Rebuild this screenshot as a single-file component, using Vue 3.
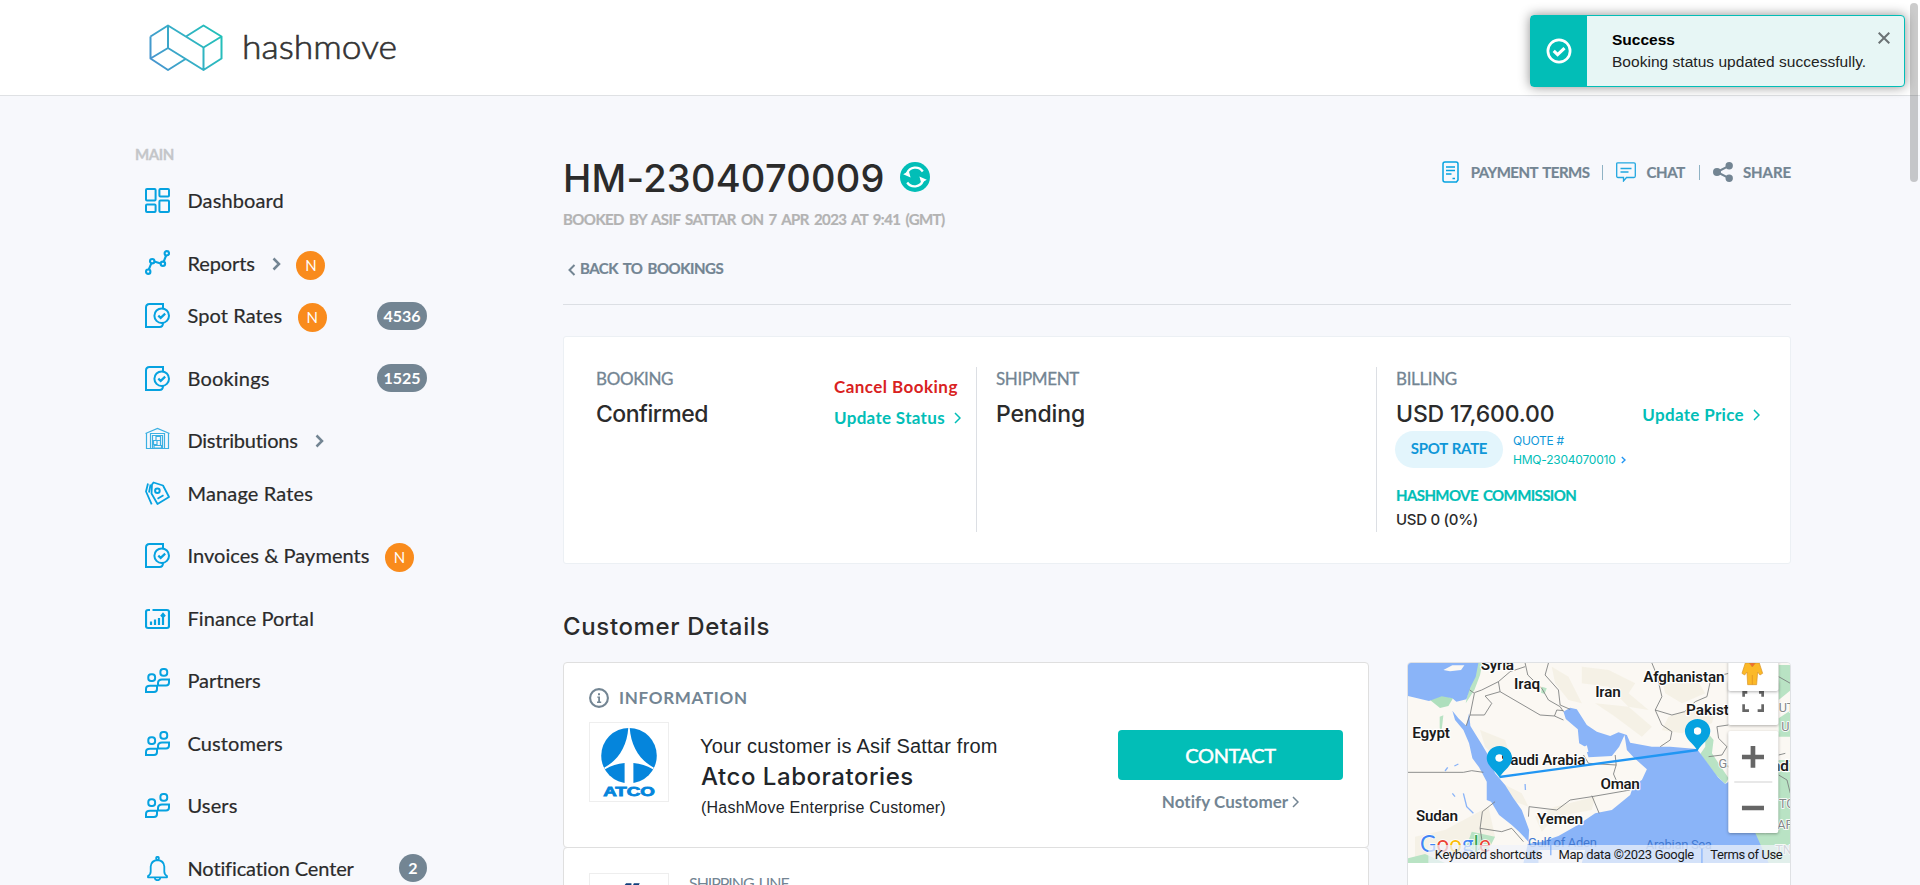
<script setup>
const menu = [
  { label: 'Dashboard', icon: 'grid', ls: 0.12 },
  { label: 'Reports', icon: 'graph', sub: true, isNew: true, ls: -0.1 },
  { label: 'Spot Rates', icon: 'booking', isNew: true, count: '4536', ls: 0.09 },
  { label: 'Bookings', icon: 'booking', count: '1525', ls: 0.18 },
  { label: 'Distributions', icon: 'warehouse', sub: true, ls: -0.24 },
  { label: 'Manage Rates', icon: 'tag', ls: 0.15 },
  { label: 'Invoices & Payments', icon: 'booking', isNew: true, ls: 0.04 },
  { label: 'Finance Portal', icon: 'finance', ls: 0.08 },
  { label: 'Partners', icon: 'people', ls: -0.08 },
  { label: 'Customers', icon: 'people', ls: 0.1 },
  { label: 'Users', icon: 'people', ls: 0.13 },
  { label: 'Notification Center', icon: 'bell', count: '2', ls: -0.12 }
]
</script>

<template>
  <div class="page">
    <header class="topbar">
      <svg class="brand" width="260" height="60" viewBox="0 0 260 60">
        <defs>
          <linearGradient id="brandGrad" gradientUnits="userSpaceOnUse" x1="0" y1="50" x2="74" y2="8">
            <stop offset="0" stop-color="#4a90d0" />
            <stop offset="0.5" stop-color="#35afc6" />
            <stop offset="1" stop-color="#1fc3b6" />
          </linearGradient>
        </defs>
        <g fill="none" stroke="url(#brandGrad)" stroke-width="2" stroke-linejoin="round">
          <path d="M1.5 17.5 19 6.500 54.500 28.500V51L19 29V6.500M1.500 17.500V39.500L19 29M1.500 39.500 19 51 36.500 40M37 17.500 54.500 6.500 72.500 17.500 54.500 28.500M72.500 17.500V39.500L54.500 51" />
        </g>
        <text x="93" y="39.500" textLength="155" lengthAdjust="spacingAndGlyphs">hashmove</text>
      </svg>
    </header>

    <div class="body">
      <aside class="sidebar">
        <div class="section">MAIN</div>
        <nav>
          <div v-for="m in menu" :key="m.label" class="item" :class="{ tight: m.sub }">
            <svg class="icon" :class="m.icon" width="25" height="25" viewBox="0 0 25 25">
              <g v-if="m.icon === 'grid'" fill="none" stroke="#06a2e0" stroke-width="2">
                <rect x="1" y="1" width="9.600" height="11.600" rx="1" />
                <rect x="14.400" y="1" width="9.600" height="7.600" rx="1" />
                <rect x="1" y="16.400" width="9.600" height="7.600" rx="1" />
                <rect x="14.400" y="12.400" width="9.600" height="11.600" rx="1" />
              </g>
              <g v-else-if="m.icon === 'graph'" fill="none" stroke="#06a2e0" stroke-width="2.100">
                <path d="M3.800 19.500 6.300 13.300M9.300 11.600 15.700 13.400M18.700 11.700 21.100 5.500" />
                <circle cx="3.200" cy="21.700" r="2.200" /><circle cx="7.200" cy="11.200" r="2.200" />
                <circle cx="17.900" cy="13.800" r="2.200" /><circle cx="21.800" cy="3.300" r="2.200" />
              </g>
              <g v-else-if="m.icon === 'booking'" fill="none" stroke="#06a2e0" stroke-width="2">
                <path d="M18 5.500V1H4.500Q1 1 1 4.500V24H14.500Q18 24 18 20" />
                <circle cx="16.700" cy="12.700" r="7.300" />
                <path d="M13.300 12.600 15.700 14.900 20.200 10.600" stroke-width="2.200" />
              </g>
              <g v-else-if="m.icon === 'warehouse'" fill="none" stroke="#3cb0e2" stroke-width="1.200">
                <path d="M.5 6.500 12.500 1.500 24.500 6.500M1.500 6V21.500H23.500V6M5.500 21V6.500H19.500V21M7.500 21V8.500H17.500V21" />
                <path d="M11 9.500H15.500V13.500H11ZM8.500 13.500H12V17.500H8.500ZM9 18.500H16.500V21H9ZM12 13.500H15.500V18" />
              </g>
              <g v-else-if="m.icon === 'tag'" fill="none" stroke="#06a2e0" stroke-width="1.800" stroke-linejoin="round">
                <path d="M8.500 1.500 18 4.500 24 16 12.500 23 6.500 12.500 7 3.500Z" />
                <circle cx="12.400" cy="9.800" r="2.300" stroke-width="2" />
                <path d="M12.500 17.700 18.500 14.200M3 2.500 1 10.500 6.700 23.300M5.600 3.500 4 11.500" />
              </g>
              <g v-else-if="m.icon === 'finance'" fill="none" stroke="#06a2e0" stroke-width="2.200">
                <path d="M5 4H3Q1 4 1 6V20Q1 22 3 22H22Q24 22 24 20V6Q24 4 22 4H7.500" />
                <path d="M6 19V15.500M10 19V13.500M14 19V12M18 19V9M16 10.500 18 8 20 10.500" />
              </g>
              <g v-else-if="m.icon === 'people'" fill="none" stroke="#06a2e0" stroke-width="2">
                <rect x="3.300" y="6.300" width="6.800" height="6.700" rx="2.800" />
                <rect x="15.400" y="1" width="6.800" height="6.700" rx="2.800" />
                <path d="M5 17.800H12V21Q12 24 9 24H1V21Q1 17.800 5 17.800ZM17 11.500H24V14.500Q24 17.500 21 17.500H13V15Q13 11.500 17 11.500Z" />
              </g>
              <g v-else fill="none" stroke="#06a2e0" stroke-width="1.800" stroke-linejoin="round">
                <path d="M3 21.300H22V20Q19.300 18.500 19.300 15.500V10.500Q18.700 4.500 12.500 4 6.300 4.500 5.700 10.500V15.500Q5.700 18.500 3 20Z" />
                <circle cx="12.500" cy="2.200" r="1.400" /><path d="M9.800 22Q10 24.200 12.500 24.200T15.200 22" />
              </g>
            </svg>
            <span class="label" :style="{ letterSpacing: m.ls + 'px' }">{{ m.label }}</span>
            <svg v-if="m.sub" class="chev" width="9" height="14" viewBox="0 0 9 14"><path d="M1.500 1.500 7 7 1.500 12.500" fill="none" stroke="#738593" stroke-width="2.500" /></svg>
            <span v-if="m.isNew" class="new">N</span>
            <span v-if="m.count" class="count">{{ m.count }}</span>
          </div>
        </nav>
      </aside>

      <main class="content">
        <section class="head">
          <div>
            <h1>HM-2304070009
              <svg width="30" height="30" viewBox="0 0 30 30">
                <circle cx="15" cy="15" r="15" fill="#02beb7" />
                <g fill="none" stroke="#fff" stroke-width="2.300"><path d="M7 11.500A9 9 0 0 1 22.800 9.500M23 18.500A9 9 0 0 1 7.200 20.500" /></g>
                <path d="M3.200 12.200 8.800 9 10.600 15.500ZM26.800 17.800 21.200 21 19.400 14.500Z" fill="#fff" />
              </svg>
            </h1>
            <p class="booked">BOOKED BY ASIF SATTAR ON 7 APR 2023 AT 9:41 (GMT)</p>
            <a class="back">
              <svg width="8" height="12" viewBox="0 0 8 12"><path d="M6.500 1 1.500 6 6.500 11" fill="none" stroke="#738593" stroke-width="2" /></svg>BACK TO BOOKINGS
            </a>
          </div>
          <div class="tools">
            <svg width="17" height="22" viewBox="0 0 17 22" fill="none" stroke="#06a2e0" stroke-width="1.500">
              <path d="M3 1H14Q16 1 16 3V19L14.500 21H3Q1 21 1 19V3Q1 1 3 1ZM4 6H13M4 9.500H13M4 13H9.500M10.500 17.500H13" />
            </svg>
            <span class="t1">PAYMENT TERMS</span><i class="bar"></i>
            <svg width="20" height="20" viewBox="0 0 20 20" fill="none" stroke="#22a7e0" stroke-width="1.300">
              <path d="M2 .8H18Q19.300 .8 19.300 2V14Q19.300 15.500 18 15.500H10.500L7.500 19V15.500H2Q.7 15.500 .7 14V2Q.7 .8 2 .8ZM4.500 6.500H15.500M4.500 10H12.500" />
            </svg>
            <span class="t2">CHAT</span><i class="bar"></i>
            <svg width="20" height="20" viewBox="0 0 20 20" fill="#738593" stroke="#738593" stroke-width="2">
              <path d="M4 10 16 3.800M4 10 16 16.200" /><circle cx="4" cy="10" r="3" /><circle cx="16.200" cy="3.800" r="2.700" /><circle cx="16.200" cy="16.200" r="2.700" />
            </svg>
            <span class="t3">SHARE</span>
          </div>
        </section>

        <section class="status">
          <div class="col">
            <div><h4>BOOKING</h4><h3>Confirmed</h3></div>
            <div class="actions">
              <a class="red">Cancel Booking</a>
              <a>Update Status<svg width="7" height="12" viewBox="0 0 7 12"><path d="M1 1 6 6 1 11" fill="none" stroke="#02beb7" stroke-width="1.500" /></svg></a>
            </div>
          </div>
          <div class="col mid"><div><h4>SHIPMENT</h4><h3>Pending</h3></div></div>
          <div class="col last">
            <div>
              <h4>BILLING</h4><h3>USD 17,600.00</h3>
              <div class="quote">
                <span class="pill">SPOT RATE</span>
                <div class="qtext"><div>QUOTE #</div><div class="qno">HMQ-2304070010<svg width="5" height="8" viewBox="0 0 5 8"><path d="M.8 1 4 4 .8 7" fill="none" stroke="#2196f3" stroke-width="1.400" /></svg></div></div>
              </div>
              <div class="comm">HASHMOVE COMMISSION</div>
              <div class="zero">USD 0 (0%)</div>
            </div>
            <a class="price">Update Price<svg width="7" height="12" viewBox="0 0 7 12"><path d="M1 1 6 6 1 11" fill="none" stroke="#02beb7" stroke-width="1.500" /></svg></a>
          </div>
        </section>

        <h2>Customer Details</h2>
        <div class="details">
          <div class="stack">
            <section class="box customer">
              <div class="info">
                <svg width="20" height="20" viewBox="0 0 20 20"><circle cx="10" cy="10" r="8.900" fill="none" stroke="#738593" stroke-width="2.100" /><path d="M8.300 8.500H11V13.500H12.200V14.900H8V13.500H9.200V9.700H8.300ZM9 5.200H11V7.200H9Z" fill="#738593" /></svg>
                INFORMATION
              </div>
              <div class="who">
                <svg class="logo" width="80" height="80" viewBox="0 0 80 80">
                  <circle cx="40" cy="33.500" r="28.500" fill="#0585dc" />
                  <path d="M39.300 4.500H40.700C42 24 51 38 65.500 46L64.500 47.500C58 43.500 52 41.500 44.500 41V63H35.500V41C28 41.500 22 43.500 15.500 47.500L14.500 46C29 38 38 24 39.300 4.500Z" fill="#fff" />
                  <text x="13.500" y="75" textLength="53" lengthAdjust="spacingAndGlyphs">ATCO</text>
                </svg>
                <div class="names">
                  <p class="your">Your customer is Asif Sattar from</p>
                  <p class="company">Atco Laboratories</p>
                  <p class="kind">(HashMove Enterprise Customer)</p>
                </div>
                <div class="cta">
                  <button>CONTACT</button>
                  <a>Notify Customer<svg width="7" height="12" viewBox="0 0 7 12"><path d="M1 1 6 6 1 11" fill="none" stroke="#738593" stroke-width="1.500" /></svg></a>
                </div>
              </div>
            </section>
            <section class="box ship">
              <svg class="logo" width="80" height="80" viewBox="0 0 80 80"><path d="M37 9.500H42.500V12H35ZM45 9.500H51L48 16H42Z" fill="#123f7c" /></svg>
              <span>SHIPPING LINE</span>
            </section>
          </div>

          <section class="mapcard">
            <svg class="map" width="383" height="200" viewBox="39 39 1148 600" preserveAspectRatio="none">
              <rect x="39" y="39" width="1148" height="600" fill="#fbf8f3" />
              <g fill="#f2eee0">
                <path d="M255 240 330 270 340 300 300 320 270 290ZM560 50 640 60 720 100 700 130 760 180 700 170 640 110 560 100ZM470 50 520 80 560 160 520 150 480 100ZM820 200 900 170 960 180 950 220 860 250 800 240ZM320 400 380 430 400 470 360 455 330 430ZM800 90 900 80 930 130 860 160 810 130ZM60 560 150 540 280 470 300 560 250 600 60 639ZM600 160 700 170 770 230 740 260 660 200ZM420 500 480 470 600 440 590 480 480 500 440 545Z" opacity=".7" />
              </g>
              <g fill="#b9e3c4">
                <path d="M240 39H262L255 75 238 120 212 160 222 110 240 80ZM1060 540 1110 550 1187 520V639H1115L1075 570ZM1187 330V540H1140L1120 440 1150 330ZM930 240 955 270 950 310 1000 385 990 402 962 375 915 312 930 290ZM230 545 300 560 280 600 210 600ZM39 625 90 612 150 639H39ZM1150 45H1187V120L1150 150ZM1150 205 1187 180V260H1150ZM134 200 145 196 140 240 134 235ZM440 110 455 115 448 132 438 128Z" />
                <path d="M105 150 140 136 174 145 160 168 135 174Z" fill="#aedfbd" />
              </g>
              <g fill="#8ab4f8">
                <path d="M39 39H250L242 80 226 112 214 148 184 155 172 145 140 139 102 153 39 138Z" />
                <path d="M172 182 190 205 214 228 222 190 226 228 258 280 279 315 300 370 330 405 355 445 380 480 402 540 400 575 372 545 350 525 312 495 288 455 275 450 275 395 252 352 232 325 222 280 205 240 180 210Z" />
                <path d="M505 185 525 173 545 178 575 225 605 245 645 258 670 247 695 255 705 278 770 290 825 290 905 297 930 330 968 382 990 402 1015 385V450L1080 549 1120 639H385L398 582 440 575 490 558 548 525 600 490 650 480 705 435 715 405 740 390 755 358 715 322 695 300 688 255 672 290 650 318 580 322 570 290 552 280 548 238 512 207Z" />
              </g>
              <path d="M145 60 172 46H208L198 60 165 64ZM565 292 575 286 580 305 565 310ZM430 600 570 600 560 639H430Z" fill="#fbf8f3" />
              <g fill="none" stroke="#77797a" stroke-width="2.500" stroke-linejoin="round">
                <path d="M224 120 238 130 225 195M238 128 260 120 310 95 345 65 390 50M310 95 315 125 270 138 290 160 268 195 225 195 213 228M315 125 435 195 478 198 505 210M478 198 485 180 505 182M390 39 398 75 440 115 460 150 495 170 505 185M460 39 450 75 490 120 495 165 525 178M39 367H205L230 362 265 367M770 39 785 75 800 140 780 180 830 195 868 185 900 155 935 140 945 95 960 80 1000 70M780 180 800 225 830 245 825 270 795 290M999 225 965 230 970 265 995 290 980 315 940 320M660 315 663 345 655 372 665 395M705 420 590 440 525 450 485 480 402 470 400 500M663 345 580 340 565 315M590 437 612 490M300 455 262 485 255 535 320 545 350 535 385 575M255 535 262 580 250 600M1150 80 1185 100M1150 375 1175 390 1185 430M1150 315 1170 310" />
              </g>
              <g fill="none" stroke="#8ab4f8" stroke-width="4"><path d="M205 430 215 470 235 490M172 430 180 440M390 402 391 420M150 363 158 352M178 348 190 342" /></g>
              <g class="region">
                <text x="1150" y="187">UT</text><text x="1158" y="242">U</text><text x="1151" y="473">TG</text><text x="1146" y="537">AP</text><text x="1140" y="612">TN</text><text x="970" y="353">GJ</text>
              </g>
              <g class="sea"><text x="399" y="591" textLength="206">Gulf of Aden</text><text x="752" y="598" textLength="198">Arabian Sea</text></g>
              <g class="country">
                <text x="257" y="59" textLength="100">Syria</text><text x="357" y="118" textLength="78">Iraq</text><text x="600" y="142" textLength="77">Iran</text>
                <text x="744" y="96" textLength="244">Afghanistan</text><text x="872" y="194">Pakistan</text><text x="52" y="265" textLength="113">Egypt</text>
                <text x="318" y="346" textLength="253">Saudi Arabia</text><text x="616" y="417" textLength="118">Oman</text><text x="426" y="522" textLength="138">Yemen</text><text x="63" y="513" textLength="126">Sudan</text><text x="1116" y="363">India</text>
              </g>
              <path d="M313 381 907 300" stroke="#2196f3" stroke-width="7" />
              <g fill="#06a2e0">
                <path d="M313 382C300 360 275 348 275 325A38 37 0 0 1 351 325C351 348 326 360 313 382ZM313 313A11 11 0 0 0 313 335 11 11 0 0 0 313 313Z" fill-rule="evenodd" />
                <path d="M907 302C894 280 869 268 869 244A38 37 0 0 1 945 244C945 268 920 280 907 302ZM907 232A11 11 0 0 0 907 254 11 11 0 0 0 907 232Z" fill-rule="evenodd" />
              </g>
              <circle cx="311" cy="324" r="10" fill="#fff" /><circle cx="906" cy="243" r="10" fill="#fff" />
              <g class="goog"><text x="75" y="605" textLength="212"><tspan fill="#4285f4">G</tspan><tspan fill="#ea4335">o</tspan><tspan fill="#fbbc04">o</tspan><tspan fill="#4285f4">g</tspan><tspan fill="#34a853">l</tspan><tspan fill="#ea4335">e</tspan></text></g>
              <path d="M100 585H1187V639H100Z" fill="#f0f3fa" opacity=".73" />
              <path d="M920 596V639M467 585V616" stroke="#8ab4f8" stroke-width="4" />
              <g class="legal"><text x="119" y="627" textLength="323">Keyboard shortcuts</text><text x="490" y="627" textLength="407">Map data ©2023 Google</text><text x="945" y="627" textLength="217">Terms of Use</text></g>
              <g class="ctl">
                <rect x="999" y="90" width="150" height="135" rx="6" />
              </g>
              <path d="M1045 140V127H1056M1091 127H1102V140M1045 163V182H1061M1087 182H1102V163" fill="none" stroke="#666" stroke-width="8" />
              <g class="ctl">
                <rect x="999" y="20" width="150" height="103" rx="6" />
                <rect x="999" y="243" width="150" height="306" rx="6" />
              </g>
              <path d="M1040 321H1106M1073 288V353M1040 474H1106" stroke="#666" stroke-width="14" />
              <path d="M1017 396H1131" stroke="#e0e0e0" stroke-width="5" />
              <path d="M1050 39H1092L1102 70 1094 75 1087 66 1084 104H1057L1055 66 1048 75 1040 70Z" fill="#fbb928" stroke="#d99427" stroke-width="2" />
              <path d="M1062 39H1080L1071 51ZM1071 75V104" fill="#ef6c35" stroke="#dc8b22" stroke-width="2" />
            </svg>
          </section>
        </div>
      </main>
    </div>

    <div class="toast">
      <div class="mark"><svg width="26" height="26" viewBox="0 0 26 26" fill="none" stroke="#fff"><circle cx="13" cy="13" r="11.100" stroke-width="2.700" /><path d="M7.700 12.900 11.600 16.600 18.500 10.200" stroke-width="3.200" /></svg></div>
      <div class="msg"><strong>Success</strong><span>Booking status updated successfully.</span></div>
      <svg class="close" width="12" height="12" viewBox="0 0 12 12"><path d="M.7 .7 11.300 11.300M11.300 .7 .7 11.300" stroke="#6b7274" stroke-width="2" /></svg>
    </div>
    <div class="scroll"></div>
  </div>
</template>

<style>
body { overflow: hidden; background: #f7f8fc; }
</style>
<style scoped>
.page { width: 1920px; height: 885px; overflow: hidden; position: relative; background: #f7f8fc; font-family: Lato, "Open Sans", sans-serif; color: #2b2b2b; }
h1, h2, h3, h4, p { margin: 0; font-weight: inherit; }
svg { display: block; flex: none; }
.topbar { height: 95px; background: #fff; border-bottom: 1px solid #dfe1e4; box-sizing: border-box; height: 96px; }
.brand { margin-left: 148px; padding-top: 18px; }
.brand text { font: 300 33px Lato, sans-serif; fill: #333; stroke: #333; stroke-width: .6px; }
.brand { transform: translate(1px, 1px); }
.body { display: flex; }
.sidebar { width: 427px; padding-left: 135px; box-sizing: border-box; flex: none; }
.section { margin-top: 47px; height: 22px; font: 700 15px/22px Lato, sans-serif; letter-spacing: -.45px; color: #c4c6c9; -webkit-text-stroke: .3px #c4c6c9; }
nav { padding-top: 23px; }
.item { display: flex; align-items: center; height: 25px; margin-bottom: 37.500px; padding-left: 10px; }
.item.tight { margin-bottom: 27.500px; }
.icon { margin-right: 17.500px; }
.icon.graph, .icon.warehouse { transform: translateY(-1px); }
.label { font-size: 20px; line-height: 25px; white-space: nowrap; -webkit-text-stroke: .2px #2b2b2b; }
.chev { margin-left: 17px; margin-top: 1px; }
.new { width: 29px; height: 29px; margin: 4px 0 0 15.500px; border-radius: 50%; background: #f98b1c; color: #fff; font: 400 15px/29px Lato, sans-serif; text-align: center; flex: none; }
.count { margin-left: auto; box-sizing: border-box; min-width: 28px; height: 28px; padding: 0 6.500px; border-radius: 14px; background: #738593; color: #fff; font: 700 16px/27px Lato, sans-serif; text-align: center; }
.content { width: 1228px; margin-left: 136px; }
.head { display: flex; justify-content: space-between; height: 208px; border-bottom: 1px solid #dcdfe4; }
h1 { display: flex; align-items: center; gap: 15px; margin-top: 60px; font: 500 38px/44px Inter, sans-serif; letter-spacing: .25px; }
h1 svg { margin-top: -2px; }
.booked { margin-top: 8px; font: 700 15px/22px Lato, sans-serif; letter-spacing: -.58px; word-spacing: 2px; color: #b3b3b3; -webkit-text-stroke: .2px #b3b3b3; }
.back { display: flex; align-items: center; gap: 4px; margin-top: 27px; padding-left: 5px; font: 700 15px/22px Lato, sans-serif; letter-spacing: -.5px; word-spacing: 2px; color: #738593; -webkit-text-stroke: .2px #738593; }
.back svg { margin-top: 3px; }
.tools { display: flex; align-items: center; height: 24px; margin-top: 64px; font: 700 15px/24px Lato, sans-serif; color: #738593; white-space: nowrap; -webkit-text-stroke: .2px #738593; }
.t1 { margin: 0 13px 0 12px; letter-spacing: -.5px; word-spacing: 2px; }
.t2 { margin: 0 14px 0 10px; letter-spacing: -.33px; }
.t3 { margin-left: 10px; letter-spacing: -.09px; }
.bar { width: 1px; height: 15px; margin-right: 13px; background: #8fb2c4; }
.status { display: flex; margin-top: 31px; height: 228px; box-sizing: border-box; padding: 30px 30px 30px 32px; background: #fff; border: 1px solid #ecf0f4; border-radius: 3px; }
.col { display: flex; justify-content: space-between; box-sizing: border-box; width: 381px; height: 165px; border-right: 1px solid #dcdfe4; }
.col.mid { width: 400px; padding-left: 19px; }
.col.last { width: auto; flex: 1; padding-left: 19px; border: 0; }
h4 { font-size: 17px; line-height: 24px; letter-spacing: -.35px; color: #738593; -webkit-text-stroke: .3px #738593; }
h3 { margin-top: 9px; font: 500 23px/28px Inter, sans-serif; }
.mid h3, .last h3 { letter-spacing: -.15px; }
.col:first-child h3 { letter-spacing: -.5px; }
.actions { display: flex; flex-direction: column; padding-top: 4px; width: 142px; }
.actions a, .price { display: flex; align-items: center; font-weight: 700; font-size: 17px; line-height: 31px; letter-spacing: .32px; color: #02beb7; white-space: nowrap; }
.actions a.red { color: #d92121; letter-spacing: .45px; }
.actions svg { margin-left: 9px; }
.price { height: 31px; margin-top: 32px; }
.price svg { margin-left: 9px; }
.quote { display: flex; margin-top: 3px; margin-left: -1px; }
.pill { width: 108px; height: 37px; border-radius: 19px; background: #e3f5fc; color: #0f97d8; font: 700 15px/35px Lato, sans-serif; letter-spacing: -.3px; word-spacing: 1px; text-align: center; }
.qtext { margin-left: 10px; font: 400 12px/19px Inter, sans-serif; letter-spacing: -.3px; color: #0f97d8; }
.qno { display: flex; align-items: center; gap: 5px; letter-spacing: -.22px; color: #02beb7; }
.comm { margin-top: 15px; font: 700 15px/22px Lato, sans-serif; letter-spacing: -.6px; word-spacing: 2px; color: #02beb7; -webkit-text-stroke: .2px #02beb7; }
.zero { margin-top: 3px; font: 500 15px/22px Inter, sans-serif; letter-spacing: -.29px; }
h2 { margin: 46px 0 0 0; font: 500 24px/34px Inter, sans-serif; letter-spacing: .64px; }
.details { display: flex; justify-content: space-between; margin-top: 18px; }
.stack { width: 806px; }
.box { box-sizing: border-box; background: #fff; border: 1px solid #dfdfdf; border-radius: 4px; }
.customer { height: 186px; padding: 24px 25px 0; }
.info { display: flex; align-items: center; gap: 10px; height: 22px; font: 700 17px/22px Lato, sans-serif; letter-spacing: .7px; color: #738593; }
.who { display: flex; margin-top: 13px; }
.logo { border: 1px solid #eee; box-sizing: border-box; }
.logo text { font: 700 13px "Liberation Sans", sans-serif; fill: #0585dc; stroke: #0585dc; stroke-width: .8px; }
.names { margin-left: 31px; white-space: nowrap; color: #212529; font-family: "Liberation Sans", sans-serif; }
.your { padding-top: 9px; font-size: 20px; line-height: 30px; letter-spacing: .22px; }
.company { padding-left: 1px; font: 500 24px/32px Inter, sans-serif; letter-spacing: .54px; }
.kind { padding-left: 1px; font-size: 16px; line-height: 30px; letter-spacing: .22px; }
.cta { margin: 8px 0 0 auto; width: 225px; }
button { display: block; width: 225px; height: 50px; border: 0; border-radius: 4px; background: #02beb7; color: #fff; font: 400 20px/48px Lato, sans-serif; letter-spacing: -.4px; padding: 0; -webkit-text-stroke: .5px #fff; }
.cta a { display: flex; align-items: center; justify-content: center; gap: 4px; margin-top: 10px; font: 700 17px/24px Lato, sans-serif; letter-spacing: .05px; color: #738593; }
.ship { height: 160px; margin-top: -1px; display: flex; padding: 25px; }
.ship span { margin: 0 0 0 20px; font-size: 16px; line-height: 20px; letter-spacing: -1.050px; word-spacing: 2px; color: #738593; }
.mapcard { width: 384px; height: 300px; box-sizing: border-box; border: 1px solid #dfe1e4; background: #fff; border-radius: 4px; overflow: hidden; }
.map { font-family: Roboto, sans-serif; }
.country { font-size: 46px; font-weight: 600; fill: #1b1b1b; stroke: #fff; stroke-width: 7px; paint-order: stroke; stroke-linejoin: round; }
.region { font-size: 38px; fill: #86898b; stroke: #fff; stroke-width: 5px; paint-order: stroke; }
.sea { font-size: 39px; fill: #4179d2; }
.goog { font: 400 67px Lato, sans-serif; stroke: #fff; stroke-width: 4px; paint-order: stroke; }
.legal { font-size: 39px; fill: #191919; }
.ctl rect { fill: #fff; filter: drop-shadow(0 3px 4px rgba(0,0,0,.3)); }
.toast { position: absolute; left: 1530px; top: 15px; width: 375px; height: 72px; box-sizing: border-box; display: flex; border: 1px solid #02beb7; border-radius: 4px; background: #e7f6f5; box-shadow: 0 0 12px rgba(0,0,0,.45); color: #000; }
.mark { width: 56px; display: flex; align-items: center; justify-content: center; background: #02beb7; }
.msg { display: flex; flex-direction: column; padding: 13px 0 0 25px; font: 400 15.500px/22px "Liberation Sans", sans-serif; }
.msg span { color: #222; letter-spacing: .03px; }
.close { position: absolute; right: 14px; top: 16px; }
.scroll { position: absolute; left: 1910px; top: 3px; width: 8px; height: 179px; border-radius: 4px; background: rgba(0,0,0,.2); }
</style>
